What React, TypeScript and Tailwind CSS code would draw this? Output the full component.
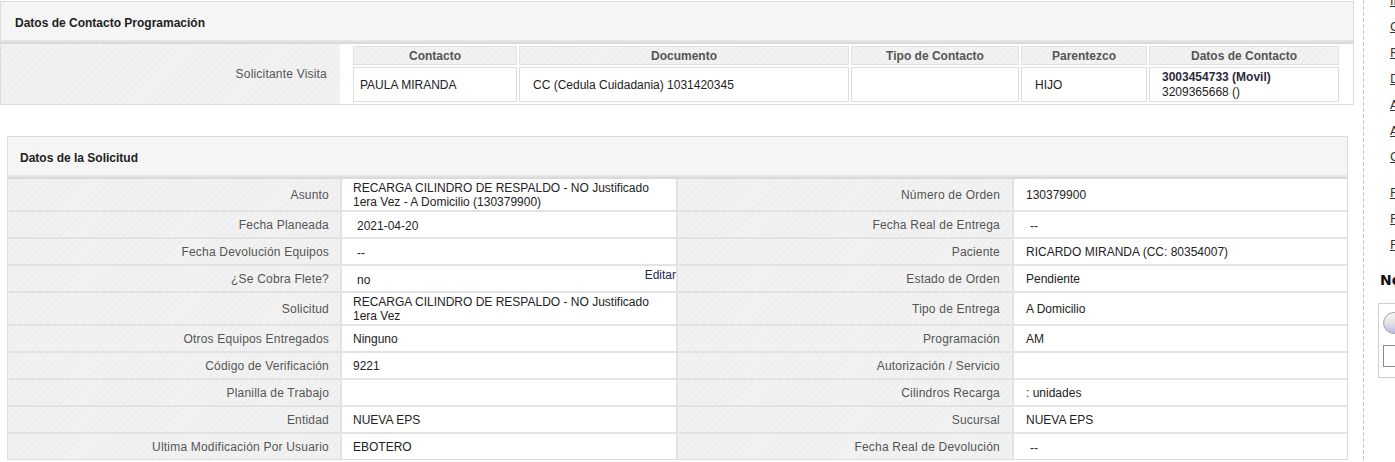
import React from "react";

type Row = {
  l1: string;
  v1: string | string[];
  i1?: boolean;
  editar?: boolean;
  l2: string;
  v2: string;
  i2?: boolean;
  tall?: boolean;
};

const rows: Row[] = [
  {
    l1: "Asunto",
    v1: ["RECARGA CILINDRO DE RESPALDO - NO Justificado", "1era Vez - A Domicilio (130379900)"],
    l2: "Número de Orden",
    v2: "130379900",
    tall: true,
  },
  { l1: "Fecha Planeada", v1: "2021-04-20", i1: true, l2: "Fecha Real de Entrega", v2: "--", i2: true },
  { l1: "Fecha Devolución Equipos", v1: "--", i1: true, l2: "Paciente", v2: "RICARDO MIRANDA (CC: 80354007)" },
  { l1: "¿Se Cobra Flete?", v1: "no", i1: true, editar: true, l2: "Estado de Orden", v2: "Pendiente" },
  {
    l1: "Solicitud",
    v1: ["RECARGA CILINDRO DE RESPALDO - NO Justificado", "1era Vez"],
    l2: "Tipo de Entrega",
    v2: "A Domicilio",
    tall: true,
  },
  { l1: "Otros Equipos Entregados", v1: "Ninguno", l2: "Programación", v2: "AM" },
  { l1: "Código de Verificación", v1: "9221", l2: "Autorización / Servicio", v2: "" },
  { l1: "Planilla de Trabajo", v1: "", l2: "Cilindros Recarga", v2: ": unidades" },
  { l1: "Entidad", v1: "NUEVA EPS", l2: "Sucursal", v2: "NUEVA EPS" },
  { l1: "Ultima Modificación Por Usuario", v1: "EBOTERO", l2: "Fecha Real de Devolución", v2: "--", i2: true },
];

const stripe =
  "bg-[repeating-linear-gradient(135deg,#f2f2f2_0px,#f2f2f2_3px,#eeeeee_3px,#eeeeee_5px)]";

function PanelHeader({ title, h, pl }: { title: string; h: string; pl: string }) {
  return (
    <div>
      <div className={`${h} ${pl} flex items-center pt-[3px] bg-[#f5f5f5] text-[12px] font-bold text-[#222]`}>
        {title}
      </div>
      <div className="h-[4px] bg-gradient-to-b from-[#e9e9e9] to-[#d5d5d5]" />
    </div>
  );
}

function Label({ text, tall, pr }: { text: string; tall?: boolean; pr: string }) {
  return (
    <div
      className={`${tall ? "h-[31px]" : "h-[25px]"} ${stripe} ${pr} flex items-center justify-end text-[12px] tracking-[0.2px] text-[#555]`}
    >
      {text}
    </div>
  );
}

function Value({
  v,
  tall,
  indent,
  editar,
  pl,
}: {
  v: string | string[];
  tall?: boolean;
  indent?: boolean;
  editar?: boolean;
  pl: string;
}) {
  return (
    <div
      className={`${tall ? "h-[31px]" : "h-[25px]"} ${pl} relative flex flex-col justify-center bg-white text-[12px] text-[#222] leading-[14px]`}
    >
      {Array.isArray(v) ? (
        v.map((line, i) => <div key={i}>{line}</div>)
      ) : (
        <div className={indent ? "pl-[4px] pt-[2px]" : ""}>{v}</div>
      )}
      {editar && (
        <span className="absolute right-0 top-[2px] text-[12px] text-[#1f2a55]">Editar</span>
      )}
    </div>
  );
}

const sideLinks = ["Imprimir", "Cambiar", "Reprogramar", "Despachar", "Anular", "Asignar", "Cerrar"];
const sideLinks2 = ["Formato", "Formato", "Formato"];

export default function App() {
  return (
    <div
      className="flex h-[462px] w-[1395px] overflow-hidden bg-white text-[12px] text-[#222]"
      style={{ fontFamily: '"Liberation Sans", Arial, sans-serif' }}
    >
      <div className="w-[1356px] shrink-0">
        {/* Panel 1 */}
        <div className="mt-[1px] w-[1354px] border border-[#dcdcdc]">
          <PanelHeader title="Datos de Contacto Programación" h="h-[38px]" pl="pl-[14px]" />
          <div className="flex">
            <div
              className={`w-[339px] ${stripe} flex items-center justify-end pr-[13px] text-[12px] tracking-[0.2px] text-[#555]`}
            >
              Solicitante Visita
            </div>
            <div className="px-[13px] pt-[2px] pb-[2px]">
              <div className="grid grid-cols-[164px_330px_168px_126px_190px] gap-[2px]">
                {["Contacto", "Documento", "Tipo de Contacto", "Parentezco", "Datos de Contacto"].map((h) => (
                  <div
                    key={h}
                    className={`h-[19px] ${stripe} border border-[#e2e2e2] flex items-center justify-center font-bold text-[#555]`}
                  >
                    {h}
                  </div>
                ))}
                <div className="h-[35px] border border-[#dddddd] flex items-center pl-[6px]">PAULA MIRANDA</div>
                <div className="h-[35px] border border-[#dddddd] flex items-center pl-[13px]">
                  CC (Cedula Cuidadania) 1031420345
                </div>
                <div className="h-[35px] border border-[#dddddd]" />
                <div className="h-[35px] border border-[#dddddd] flex items-center pl-[13px]">HIJO</div>
                <div className="h-[35px] border border-[#dddddd] flex flex-col justify-center pl-[12px] leading-[15px]">
                  <span className="font-bold text-[#2a2a3a]">3003454733 (Movil)</span>
                  <span>3209365668 ()</span>
                </div>
              </div>
            </div>
          </div>
        </div>

        {/* Panel 2 */}
        <div className="ml-[7px] mt-[31px] w-[1341px] border border-[#dcdcdc]">
          <PanelHeader title="Datos de la Solicitud" h="h-[38px]" pl="pl-[12px]" />
          <div className="grid grid-cols-[332px_334px_334px_333px] gap-[2px] bg-[#e3e3e3]">
            {rows.map((r, i) => (
              <React.Fragment key={i}>
                <Label text={r.l1} tall={r.tall} pr="pr-[11px]" />
                <Value v={r.v1} tall={r.tall} indent={r.i1} editar={r.editar} pl="pl-[11px]" />
                <Label text={r.l2} tall={r.tall} pr="pr-[12px]" />
                <Value v={r.v2} tall={r.tall} indent={r.i2} pl="pl-[12px]" />
              </React.Fragment>
            ))}
          </div>
        </div>
      </div>

      {/* Sidebar */}
      <div className="flex w-[39px] shrink-0">
        <div className="w-[7px] shrink-0" />
        <div className="h-full w-[1px] shrink-0 bg-[repeating-linear-gradient(to_bottom,#c9c9c9_0px,#c9c9c9_4px,transparent_4px,transparent_6px)]" />
        <div
          className="w-[200px] shrink-0 text-[12px] text-[#333]"
          style={{ fontFamily: '"DejaVu Sans", Verdana, sans-serif' }}
        >
          <div className="mt-[-12px] ml-[26px]">
            {sideLinks.map((l, i) => (
              <div key={i} className="h-[26px] leading-[26px] underline">
                {l}
              </div>
            ))}
            <div className="h-[10px]" />
            {sideLinks2.map((l, i) => (
              <div key={i} className="h-[26px] leading-[26px] underline">
                {l}
              </div>
            ))}
          </div>
          <div className="ml-[16px] mt-[12px] h-[20px] text-[14px] font-bold leading-[20px] text-[#111]">Novedades</div>
          <div className="ml-[14px] mt-[13px] h-[75px] border border-[#cfcfcf] pl-[4px] pt-[8px]">
            <div className="h-[22px] w-[80px] rounded-[11px] border border-[#a9a9a9] bg-gradient-to-b from-[#f4f4f4] via-[#e2e2e2] to-[#b9bde8]" />
            <div className="mt-[11px] h-[22px] w-[60px] border border-[#8a8a8a] bg-white" />
          </div>
        </div>
      </div>
    </div>
  );
}
